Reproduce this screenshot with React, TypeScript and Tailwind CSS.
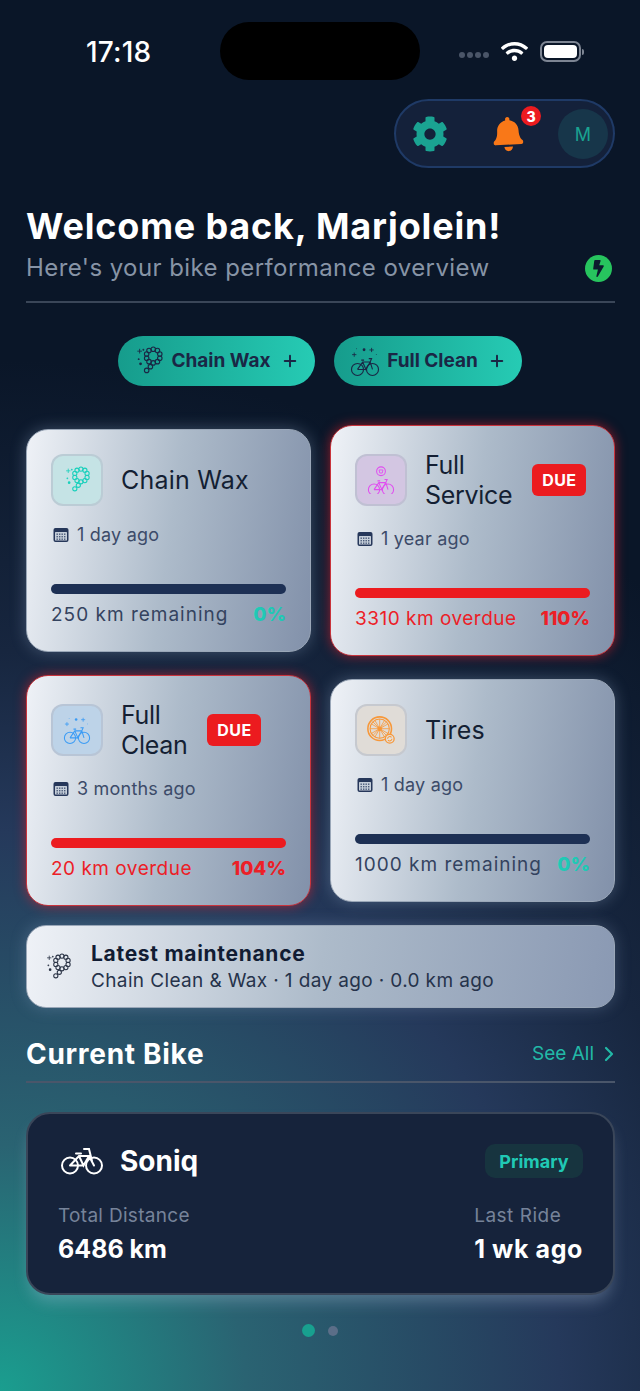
import React from 'react';
import { FaCog, FaBell, FaWifi, FaBolt } from 'react-icons/fa';
import { ChevronRight, Plus } from 'lucide-react';

type IconProps = { color: string; className?: string };

const CHAIN_LINKS = [
  [20.5, 3.5], [25, 4.8], [27.5, 8.5], [27.5, 13], [25, 16.7], [20.5, 18], [16, 16.7], [13.5, 13], [13.5, 8.5], [16, 4.8],
  [17.5, 22], [13.5, 26],
];

const ChainIcon: React.FC<IconProps> = ({ color, className }) => (
  <svg viewBox="0 0 32 32" fill="none" stroke={color} strokeWidth="1.2" className={className}>
    {CHAIN_LINKS.map(([cx, cy], i) => (
      <circle key={i} cx={cx} cy={cy} r="2.4" />
    ))}
    <path d="M6 3v5M3.500 5.500h5" strokeWidth="0.9" />
    <circle cx="7" cy="19" r="1.500" fill={color} stroke="none" />
    <circle cx="10" cy="4" r="0.4" fill={color} />
    <circle cx="5" cy="14" r="0.4" fill={color} />
  </svg>
);

const BikeFrame: React.FC<{ y: number }> = ({ y }) => (
  <g transform={`translate(0 ${y})`}>
    <circle cx="8" cy="10" r="6.4" />
    <circle cx="24" cy="10" r="6.4" />
    <path d="M8 10l5.500-8h8L24 10M13.500 2l3.500 8 4.500-8M8 10h9M12 0h3M20 -1.500h3l-1.500 3.500" />
  </g>
);

const SparkleBikeIcon: React.FC<IconProps> = ({ color, className }) => (
  <svg viewBox="0 0 32 32" fill="none" stroke={color} strokeWidth="1.2" className={className}>
    <BikeFrame y={15} />
    <circle cx="15" cy="4" r="1.500" fill={color} stroke="none" />
    <path d="M23 2v4.500M20.700 4.200h4.600M4.500 7v4.500M2.200 9.200h4.600" strokeWidth="0.9" />
    <circle cx="7" cy="3" r="0.5" fill={color} stroke="none" />
    <circle cx="28" cy="9" r="0.5" fill={color} stroke="none" />
  </svg>
);

const ServiceBikeIcon: React.FC<IconProps> = ({ color, className }) => (
  <svg viewBox="0 0 32 32" fill="none" stroke={color} strokeWidth="1.2" className={className}>
    <BikeFrame y={17} />
    <circle cx="16" cy="6" r="5" />
    <path d="M13.800 4.500h4.400l-.8 3.500h-2.800z" strokeWidth="1" />
  </svg>
);

const WheelIcon: React.FC<IconProps> = ({ color, className }) => (
  <svg viewBox="0 0 32 32" fill="none" stroke={color} strokeWidth="1.200" className={className}>
    <circle cx="14.500" cy="14.500" r="13.500" strokeWidth="1.800" />
    <circle cx="14.500" cy="14.500" r="11" />
    <circle cx="14.500" cy="14.500" r="2" fill={color} />
    <path d="M14.500 3.500v22M3.500 14.500h22M6.700 6.700l15.600 15.600M22.300 6.700L6.700 22.300M9 4.900l11 19.200M20 4.900L9 24.100M4.900 9l19.200 11M4.900 20l19.200-11" strokeWidth="0.900" />
    <circle cx="26" cy="26" r="5" fill="#e4e0db" strokeWidth="1.500" />
    <path d="M23.500 26a2.500 2.500 0 0 1 4.500-1.500M28.500 26a2.500 2.500 0 0 1-4.500 1.500" />
  </svg>
);

// plain white commuter bike on the Current Bike card
const CityBikeIcon: React.FC<{ className?: string }> = ({ className }) => (
  <svg viewBox="0 0 44 28" fill="none" stroke="white" strokeWidth="2" className={className}>
    <circle cx="10" cy="18.500" r="8" />
    <circle cx="34" cy="18.500" r="8" />
    <path d="M10 18.500L19 9h10l5 9.500M19 9l4.500 9.500L29 9M10 18.500h13.500M16 6.500h5M24 2h5l3 12" strokeLinecap="round" />
  </svg>
);

const CalendarIcon: React.FC = () => (
  <svg viewBox="0 0 16 16" className="w-4 h-4 shrink-0">
    <rect x="0.500" y="1" width="15" height="14" rx="2" fill="#26375a" />
    <rect x="2" y="5" width="12" height="8.500" rx="0.500" fill="#c5ced9" />
    {[6.500, 9, 11.500].map((y) =>
      [3.500, 6, 8.500, 11].map((x) => <rect key={`${x}-${y}`} x={x} y={y} width="1.400" height="1.400" fill="#4a5a78" />)
    )}
  </svg>
);

type CardProps = {
  title: string;
  Icon: React.FC<IconProps>;
  iconColor: string;
  iconBg: string;
  date: string;
  status: string;
  percent: string;
  due?: boolean;
};

const ServiceCard: React.FC<CardProps> = ({ title, Icon, iconColor, iconBg, date, status, percent, due }) => (
  <div
    className={`rounded-[22px] border bg-[linear-gradient(98deg,#eff2f7_0%,#adbbca_50%,#8291aa_100%)] px-[24px] pt-[24px] pb-[24px] ${
      due
        ? 'border-[#c9343c] shadow-[0_0_12px_rgba(230,30,40,0.6)]'
        : 'border-[#9aa7b8] shadow-[0_0_16px_rgba(170,195,230,0.3)]'
    }`}
  >
    <div className="flex items-center">
      <div className={`w-[52px] h-[52px] rounded-[12px] border-2 border-[#b4bdc9]/60 flex items-center justify-center shrink-0 ${iconBg}`}>
        <Icon color={iconColor} className="w-[28px] h-[28px]" />
      </div>
      <div className={`ml-[18px] text-[25px] leading-[30px] text-[#141f33] ${due ? '-tracking-[0.3px]' : 'tracking-[0.2px]'}`}>
        {due ? title.split(' ').map((word) => <div key={word}>{word}</div>) : title}
      </div>
      {due && (
        <div className="ml-[20px] w-[54px] h-[32px] rounded-[6px] bg-[#ec1b1f] text-white text-[16px] font-bold tracking-[0.4px] flex items-center justify-center">
          DUE
        </div>
      )}
    </div>
    <div className="mt-[17px] h-[24px] flex items-center gap-[8px] pl-[2px] text-[18px] tracking-[0.2px] text-[#3c4b69]">
      <CalendarIcon />
      <span className="-mt-[1px]">{date}</span>
    </div>
    <div className={`mt-[37px] h-[10px] rounded-full ${due ? 'bg-[#ec1b1f]' : 'bg-[#1d3054]'}`} />
    <div className="mt-[9px] h-[24px] flex items-center justify-between text-[19px]">
      <span className={due ? 'tracking-[0.5px] text-[#ec2027]' : 'tracking-[1px] text-[#34435f]'}>{status}</span>
      <span className={`font-extrabold ${due ? 'text-[#ec2027]' : 'text-[#20c9b5]'}`}>{percent}</span>
    </div>
  </div>
);

const QuickAction: React.FC<{ label: string; Icon: React.FC<IconProps>; width: string }> = ({ label, Icon, width }) => (
  <button className={`h-[50px] ${width} rounded-full bg-[linear-gradient(90deg,#169c8c,#26cbb4)] flex items-center justify-center gap-[7px] text-[#1a2745] text-[19px] font-bold`}>
    <Icon color="#1a2745" className="w-[30px] h-[30px]" />
    <span>{label}</span>
    <Plus className="w-[18px] h-[18px] ml-[3px]" strokeWidth={2.6} />
  </button>
);

export default function App() {
  return (
    <div className="w-[640px] h-[1391px] overflow-hidden font-['Inter',sans-serif] bg-[radial-gradient(circle_1120px_at_0%_100%,#1a9e8f_0%,#2a6372_22%,#25395b_50%,#17263f_66%,#0a1628_92%,#0a1628_100%)]">
      {/* Status bar */}
      <div className="pt-[22px] h-[80px] flex justify-center relative">
        <span className="absolute left-[86px] top-[36px] text-[28px] leading-[32px] font-medium text-white tracking-[0.2px]">17:18</span>
        <div className="w-[200px] h-[58px] rounded-full bg-black" />
        <div className="absolute right-[56px] top-[40px] flex items-center">
          <div className="flex gap-[2px] mr-[12px] mt-[6px]">
            {[0, 1, 2, 3].map((i) => (
              <span key={i} className="w-[6px] h-[6px] rounded-full bg-[#4a5568]" />
            ))}
          </div>
          <FaWifi className="w-[27px] h-[23px] text-white" />
          <div className="ml-[12px] w-[41px] h-[21px] rounded-[7px] border-2 border-[#7d8593] p-[2px]">
            <div className="w-full h-full rounded-[4px] bg-white" />
          </div>
          <span className="w-[2px] h-[6px] ml-[1px] rounded-r-full bg-[#7d8593]" />
        </div>
      </div>

      <div className="pl-[26px] pr-[25px]">
        {/* Settings, notifications, avatar */}
        <div className="mt-[19px] flex justify-end">
          <div className="relative w-[221px] h-[69px] rounded-full border-2 border-[#1f3a66] bg-[#14213a] flex items-center">
            <FaCog className="ml-[16px] w-[36px] h-[36px] text-[#1aa392]" />
            <FaBell className="ml-[45px] w-[30px] h-[36px] -rotate-[3deg] text-[#f97818]" />
            <span className="absolute left-[125px] top-[5px] w-[20px] h-[20px] rounded-full bg-[#ec1b1f] text-white text-[14px] font-extrabold flex items-center justify-center">
              3
            </span>
            <div className="absolute right-[5px] top-[8px] w-[50px] h-[50px] rounded-full bg-[#17364a] text-[#1aa392] text-[18px] flex items-center justify-center">
              M
            </div>
          </div>
        </div>

        {/* Greeting */}
        <h1 className="mt-[36px] h-[44px] text-[36px] leading-[44px] font-bold text-white tracking-[0.83px] whitespace-nowrap">
          Welcome back, Marjolein!
        </h1>
        <div className="h-[40px] flex items-center justify-between">
          <span className="text-[24px] text-[#8794a6] tracking-[0.42px]">Here's your bike performance overview</span>
          <span className="w-[27px] h-[27px] mr-[3px] rounded-full bg-[#27c45e] flex items-center justify-center">
            <FaBolt className="w-[15px] h-[17px] text-[#0d1b2e]" />
          </span>
        </div>
        <div className="mt-[13px] h-[2px] bg-[#3a4658]" />

        {/* Quick actions */}
        <div className="mt-[33px] flex justify-center gap-[19px] pr-[1px]">
          <QuickAction label="Chain Wax" Icon={ChainIcon} width="w-[197px]" />
          <QuickAction label="Full Clean" Icon={SparkleBikeIcon} width="w-[188px]" />
        </div>

        {/* Service cards */}
        <div className="mt-[39px] grid grid-cols-2 gap-[19px] items-center">
          <ServiceCard
            title="Chain Wax"
            Icon={ChainIcon}
            iconColor="#18d0bb"
            iconBg="bg-[#c5e3e5]"
            date="1 day ago"
            status="250 km remaining"
            percent="0%"
          />
          <ServiceCard
            title="Full Service"
            Icon={ServiceBikeIcon}
            iconColor="#e04ff0"
            iconBg="bg-[#d3c6e2]"
            date="1 year ago"
            status="3310 km overdue"
            percent="110%"
            due
          />
          <ServiceCard
            title="Full Clean"
            Icon={SparkleBikeIcon}
            iconColor="#3b9cf5"
            iconBg="bg-[#bdd3e8]"
            date="3 months ago"
            status="20 km overdue"
            percent="104%"
            due
          />
          <ServiceCard
            title="Tires"
            Icon={WheelIcon}
            iconColor="#f7983a"
            iconBg="bg-[#e0dcd7]"
            date="1 day ago"
            status="1000 km remaining"
            percent="0%"
          />
        </div>

        {/* Latest maintenance */}
        <div className="mt-[19px] h-[83px] rounded-[20px] border border-[#9aa7b8] bg-[linear-gradient(98deg,#eff2f7_0%,#adbbca_50%,#8a99b3_100%)] shadow-[0_0_16px_rgba(170,195,230,0.25)] flex items-center pl-[17px]">
          <ChainIcon color="#2b3446" className="w-[28px] h-[28px] shrink-0" />
          <div className="ml-[19px]">
            <div className="text-[21px] leading-[28px] font-bold tracking-[0.7px] text-[#111c33]">Latest maintenance</div>
            <div className="text-[19px] leading-[26px] text-[#26334b] tracking-[0.37px]">Chain Clean &amp; Wax · 1 day ago · 0.0 km ago</div>
          </div>
        </div>

        {/* Current bike */}
        <div className="mt-[26px] h-[40px] flex items-center justify-between">
          <h2 className="text-[28px] font-bold text-white tracking-[0.7px]">Current Bike</h2>
          <span className="flex items-center gap-[3px] text-[19px] text-[#22b9a7]">
            See All
            <ChevronRight className="w-[24px] h-[24px] -mr-[6px]" strokeWidth={2.2} />
          </span>
        </div>
        <div className="mt-[7px] h-[2px] bg-[#4a566a]" />

        <div className="mt-[29px] h-[183px] rounded-[24px] border-2 border-[#3a4659] bg-[#16233b] shadow-[0_10px_16px_-4px_rgba(190,210,235,0.3)] px-[30px] pt-[26px]">
          <div className="flex items-center justify-between">
            <div className="flex items-center">
              <CityBikeIcon className="ml-[2px] w-[44px] h-[28px]" />
              <span className="ml-[16px] text-[28px] font-bold text-white">Soniq</span>
            </div>
            <span className="w-[98px] h-[34px] rounded-[10px] bg-[#17343f] text-[#20c9b5] text-[18px] font-bold flex items-center justify-center">
              Primary
            </span>
          </div>
          <div className="mt-[22px] flex justify-between">
            <div>
              <div className="text-[19px] leading-[24px] text-[#76839a] tracking-[0.3px]">Total Distance</div>
              <div className="mt-[4px] text-[25px] leading-[34px] font-bold text-white">6486 km</div>
            </div>
            <div>
              <div className="text-[19px] leading-[24px] text-[#76839a] tracking-[0.5px]">Last Ride</div>
              <div className="mt-[4px] text-[25px] leading-[34px] font-bold text-white tracking-[0.6px]">1 wk ago</div>
            </div>
          </div>
        </div>

        {/* Pager */}
        <div className="mt-[29px] flex items-center justify-center gap-[13px] pr-[1px]">
          <span className="w-[13px] h-[13px] rounded-full bg-[#18a08f]" />
          <span className="w-[10px] h-[10px] rounded-full bg-[#5b6e88]" />
        </div>
      </div>
    </div>
  );
}
